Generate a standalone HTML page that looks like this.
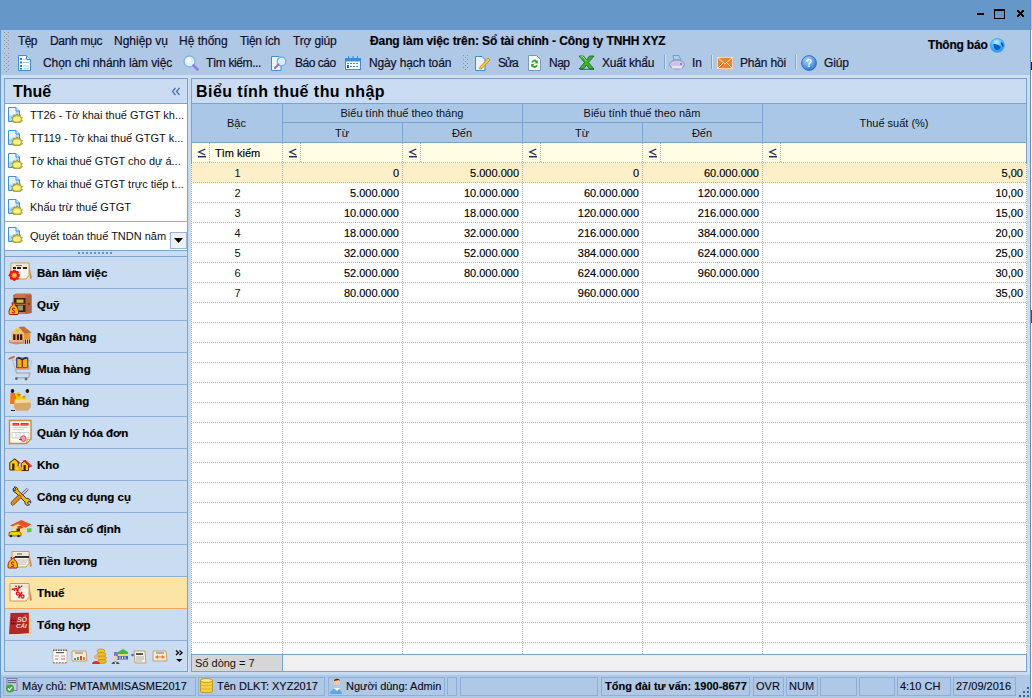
<!DOCTYPE html>
<html><head><meta charset="utf-8">
<style>
*{margin:0;padding:0;box-sizing:border-box}
html,body{width:1032px;height:698px;overflow:hidden;background:#CADCF0;font-family:"Liberation Sans",sans-serif;font-size:11px;color:#000}
.a{position:absolute}
.t{position:absolute;white-space:nowrap;line-height:1}
.g{color:#000;-webkit-text-stroke:0.15px #000}
#title{left:0;top:0;width:1032px;height:30px;background:#6597C8}
#tb{left:1px;top:30px;width:1029px;height:45px;background:#AFC8E6}
#wbl{left:0;top:0;width:1px;height:698px;background:#6597C8}
#wbr{left:1030px;top:0;width:1px;height:698px;background:#5C8EC2}
#wbr2{left:1031px;top:0;width:1px;height:698px;background:#FFFFFF}
.m{font-size:12px;color:#10102A;-webkit-text-stroke:0.2px #10102A}
.grip{width:6px;background-image:radial-gradient(circle at 1px 1px,#A79E95 0.9px,transparent 1px);background-size:4px 4px}
.gd{width:1px;height:1px;background:#9C948C}
.sep{width:1px;background:#7CA4D4;box-shadow:1px 0 0 #D2E3F5}
/* panels */
#lp{left:4px;top:78px;width:184px;height:594px;border:1px solid #7DA2CE;background:#C9DCF1}
#mp{left:191px;top:78px;width:836px;height:594px;border:1px solid #7DA2CE;background:#C9DCF1}
.hdr{background:#ABC7E7}
.hl{background:#7DA2CE}
.dv{background-image:linear-gradient(#B2B2B2 50%,transparent 50%);background-size:1px 2px;width:1px}
.dh{background-image:linear-gradient(90deg,#B2B2B2 50%,transparent 50%);background-size:2px 1px;height:1px}
.nb{font-weight:bold;font-size:11.5px;color:#000;-webkit-text-stroke:0.2px #000}
.sb{font-size:11px;color:#0A0A20;-webkit-text-stroke:0.12px #0A0A20}
.sp{position:absolute;top:677px;height:19px;border:1px solid #8EAFD7}
</style></head><body>
<div class="a" id="title"></div>
<div class="a" id="wbl"></div>
<div class="a" id="wbr"></div>
<div class="a" id="wbr2"></div>
<div class="a" style="left:1031px;top:0;width:1px;height:30px;background:#C4C4C4"></div>
<div class="a" style="left:1031px;top:62px;width:1px;height:8px;background:#102468"></div>
<div class="a" style="left:1031px;top:310px;width:1px;height:13px;background:#8A3A10"></div>
<!-- window controls -->
<div class="a" style="left:977px;top:13px;width:7px;height:2px;background:#000"></div>
<div class="a" style="left:994px;top:9px;width:11px;height:10px;border:1px solid #000;border-top-width:2px"></div>
<svg class="a" style="left:1017px;top:10px" width="7" height="7" viewBox="0 0 7 7" shape-rendering="crispEdges" fill="#000"><rect x="0" y="0" width="1" height="1"/><rect x="1" y="0" width="1" height="1"/><rect x="5" y="0" width="1" height="1"/><rect x="6" y="0" width="1" height="1"/><rect x="0" y="1" width="1" height="1"/><rect x="1" y="1" width="1" height="1"/><rect x="2" y="1" width="1" height="1"/><rect x="4" y="1" width="1" height="1"/><rect x="5" y="1" width="1" height="1"/><rect x="6" y="1" width="1" height="1"/><rect x="1" y="2" width="1" height="1"/><rect x="2" y="2" width="1" height="1"/><rect x="3" y="2" width="1" height="1"/><rect x="4" y="2" width="1" height="1"/><rect x="5" y="2" width="1" height="1"/><rect x="2" y="3" width="1" height="1"/><rect x="3" y="3" width="1" height="1"/><rect x="4" y="3" width="1" height="1"/><rect x="1" y="4" width="1" height="1"/><rect x="2" y="4" width="1" height="1"/><rect x="3" y="4" width="1" height="1"/><rect x="4" y="4" width="1" height="1"/><rect x="5" y="4" width="1" height="1"/><rect x="0" y="5" width="1" height="1"/><rect x="1" y="5" width="1" height="1"/><rect x="2" y="5" width="1" height="1"/><rect x="4" y="5" width="1" height="1"/><rect x="5" y="5" width="1" height="1"/><rect x="6" y="5" width="1" height="1"/><rect x="0" y="6" width="1" height="1"/><rect x="1" y="6" width="1" height="1"/><rect x="5" y="6" width="1" height="1"/><rect x="6" y="6" width="1" height="1"/></svg>

<!-- toolbar -->
<div class="a" id="tb"></div>
<div class="a" style="left:1px;top:75px;width:1029px;height:3px;background:#CEDFF1"></div>
<div class="a gd" style="left:4px;top:32px"></div><div class="a gd" style="left:8px;top:32px"></div><div class="a gd" style="left:4px;top:36px"></div><div class="a gd" style="left:8px;top:36px"></div><div class="a gd" style="left:4px;top:40px"></div><div class="a gd" style="left:8px;top:40px"></div><div class="a gd" style="left:4px;top:44px"></div><div class="a gd" style="left:8px;top:44px"></div><div class="a gd" style="left:4px;top:48px"></div><div class="a gd" style="left:8px;top:48px"></div><div class="a gd" style="left:6px;top:34px"></div><div class="a gd" style="left:6px;top:38px"></div><div class="a gd" style="left:6px;top:42px"></div><div class="a gd" style="left:6px;top:46px"></div>
<div class="a gd" style="left:4px;top:53px"></div><div class="a gd" style="left:8px;top:53px"></div><div class="a gd" style="left:4px;top:57px"></div><div class="a gd" style="left:8px;top:57px"></div><div class="a gd" style="left:4px;top:61px"></div><div class="a gd" style="left:8px;top:61px"></div><div class="a gd" style="left:4px;top:65px"></div><div class="a gd" style="left:8px;top:65px"></div><div class="a gd" style="left:4px;top:69px"></div><div class="a gd" style="left:8px;top:69px"></div><div class="a gd" style="left:6px;top:55px"></div><div class="a gd" style="left:6px;top:59px"></div><div class="a gd" style="left:6px;top:63px"></div><div class="a gd" style="left:6px;top:67px"></div><div class="a gd" style="left:6px;top:71px"></div>

<div class="t m" style="left:18px;top:35px;letter-spacing:-0.6px">Tệp</div>
<div class="t m" style="left:50px;top:35px;letter-spacing:-0.3px">Danh mục</div>
<div class="t m" style="left:114px;top:35px">Nghiệp vụ</div>
<div class="t m" style="left:179px;top:35px">Hệ thống</div>
<div class="t m" style="left:240px;top:35px;letter-spacing:-0.3px">Tiện ích</div>
<div class="t m" style="left:293px;top:35px;letter-spacing:-0.17px">Trợ giúp</div>
<div class="t m" style="left:370px;top:35px;font-weight:bold;color:#000;letter-spacing:-0.1px">Đang làm việc trên: Sổ tài chính - Công ty TNHH XYZ</div>
<div class="t m" style="left:928px;top:39px;font-weight:bold;color:#000;letter-spacing:-0.2px">Thông báo</div>

<div class="t m" style="left:43px;top:57px;letter-spacing:-0.1px">Chọn chi nhánh làm việc</div>
<div class="t m" style="left:206px;top:57px;letter-spacing:-0.4px">Tìm kiếm...</div>
<div class="t m" style="left:295px;top:57px;letter-spacing:-0.47px">Báo cáo</div>
<div class="t m" style="left:369px;top:57px;letter-spacing:-0.13px">Ngày hạch toán</div>
<div class="t m" style="left:498px;top:57px;letter-spacing:-1.0px">Sửa</div>
<div class="t m" style="left:549px;top:57px;letter-spacing:-0.5px">Nạp</div>
<div class="t m" style="left:602px;top:57px;letter-spacing:-0.2px">Xuất khẩu</div>
<div class="t m" style="left:692px;top:57px">In</div>
<div class="t m" style="left:740px;top:57px;letter-spacing:-0.17px">Phản hồi</div>
<div class="t m" style="left:824px;top:57px;letter-spacing:-0.15px">Giúp</div>
<div class="a gd" style="left:463px;top:55px"></div><div class="a gd" style="left:467px;top:55px"></div><div class="a gd" style="left:465px;top:57px"></div><div class="a gd" style="left:463px;top:59px"></div><div class="a gd" style="left:467px;top:59px"></div><div class="a gd" style="left:465px;top:61px"></div><div class="a gd" style="left:463px;top:63px"></div><div class="a gd" style="left:467px;top:63px"></div><div class="a gd" style="left:465px;top:65px"></div><div class="a gd" style="left:463px;top:67px"></div><div class="a gd" style="left:467px;top:67px"></div><div class="a gd" style="left:465px;top:69px"></div>
<div class="a sep" style="left:664px;top:55px;height:14px"></div>
<div class="a sep" style="left:711px;top:55px;height:14px"></div>
<div class="a sep" style="left:795px;top:55px;height:14px"></div>

<!-- ICONS_TB -->
<svg class="a" style="left:18px;top:55px" width="13" height="16" viewBox="0 0 13 16"><path d="M0.5 0.5H8.5L12.5 4.5V15.5H0.5Z" fill="#FFFFFF" stroke="#3C8CDC" stroke-width="1"/><path d="M8.5 0.5V4.5H12.5" fill="#D6E8FA" stroke="#3C8CDC" stroke-width="1"/><g fill="#2E7FD2"><rect x="2" y="3" width="2" height="2"/><rect x="2" y="6.5" width="2" height="2"/><rect x="2" y="10" width="2" height="2"/><rect x="2" y="13" width="2" height="1.5"/></g><g fill="#A8CCF0"><rect x="5" y="3.5" width="3" height="1"/><rect x="5" y="7" width="6" height="1"/><rect x="5" y="10.5" width="6" height="1"/><rect x="5" y="13.2" width="6" height="1"/></g></svg>
<svg class="a" style="left:183px;top:55px" width="16" height="16" viewBox="0 0 16 16"><circle cx="6.5" cy="6.5" r="5.5" fill="#DDF0FA" stroke="#7AB8DA" stroke-width="1.3"/><circle cx="5.5" cy="5" r="2.5" fill="#FFFFFF" opacity="0.8"/><path d="M10.5 10.5L14.5 14.5" stroke="#9B7BD8" stroke-width="2.6" stroke-linecap="round"/></svg>
<svg class="a" style="left:271px;top:55px" width="16" height="16" viewBox="0 0 16 16"><path d="M0.5 1.5H8L10 3.5V15.5H0.5Z" fill="#EAF3FC" stroke="#3C8CDC" stroke-width="1"/><circle cx="10.5" cy="6.5" r="4.3" fill="#D8EEFA" stroke="#6AAEDC" stroke-width="1.2"/><path d="M7.5 9.5L4 13" stroke="#8E6EC8" stroke-width="2" stroke-linecap="round"/></svg>
<svg class="a" style="left:345px;top:56px" width="16" height="14" viewBox="0 0 16 14"><rect x="0.5" y="2.5" width="15" height="11" fill="#FFFFFF" stroke="#3C8CDC"/><rect x="0.5" y="2.5" width="15" height="3" fill="#3C8CDC"/><g fill="#3C8CDC"><rect x="3" y="0" width="1" height="3"/><rect x="7.5" y="0" width="1" height="3"/><rect x="12" y="0" width="1" height="3"/><rect x="2" y="7" width="2" height="1"/><rect x="5" y="7" width="2" height="1"/><rect x="8" y="7" width="2" height="1"/><rect x="11" y="7" width="2" height="1"/><rect x="5" y="10" width="2" height="1"/><rect x="8" y="10" width="2" height="1"/><rect x="11" y="10" width="2" height="1"/></g><rect x="2" y="9" width="2" height="3" fill="#1A60B0"/></svg>
<svg class="a" style="left:475px;top:55px" width="16" height="16" viewBox="0 0 16 16"><path d="M0.5 1.5H7L10 4.5V15.5H0.5Z" fill="#E8F2FC" stroke="#3C8CDC" stroke-width="1"/><path d="M5 12L13 3L15 5L7 13.5L4.5 14Z" fill="#F5C842" stroke="#B8901A" stroke-width="0.8"/></svg>
<svg class="a" style="left:528px;top:55px" width="13" height="16" viewBox="0 0 13 16"><path d="M0.5 0.5H8.5L12.5 4.5V15.5H0.5Z" fill="#FFFFFF" stroke="#7A9ABE" stroke-width="1"/><path d="M3.5 7.5A3 3 0 0 1 9 6L9.8 5V8.5H6.5L7.8 7.2A1.7 1.7 0 0 0 4.8 7.8Z" fill="#2AA830"/><path d="M9.5 10A3 3 0 0 1 4 11.5L3.2 12.5V9H6.5L5.2 10.3A1.7 1.7 0 0 0 8.2 9.7Z" fill="#2AA830"/></svg>
<svg class="a" style="left:578px;top:55px" width="17" height="15" viewBox="0 0 17 15"><path d="M1 1H5.5L8.5 5L11.5 1H16L10.5 7.5L16 14H11.5L8.5 10L5.5 14H1L6.5 7.5Z" fill="#3CB030" stroke="#186818" stroke-width="0.8"/><path d="M2.5 1.8H5L8.5 6.3" stroke="#A8F090" stroke-width="0.9" fill="none"/><path d="M2 14.3H16" stroke="#186818" stroke-width="0.9"/></svg>
<svg class="a" style="left:669px;top:55px" width="16" height="15" viewBox="0 0 16 15"><path d="M4 0.5H10L12 5H5Z" fill="#9FD3F0" stroke="#5A9ACB" stroke-width="0.8"/><ellipse cx="8" cy="9.5" rx="7.5" ry="4.5" fill="#C9C6E6" stroke="#8C88B8" stroke-width="0.9"/><rect x="3" y="11" width="10" height="2.5" fill="#E6E4F4"/><circle cx="12" cy="9" r="0.9" fill="#6A6AA0"/></svg>
<svg class="a" style="left:717px;top:57px" width="16" height="12" viewBox="0 0 16 12"><rect x="0" y="0" width="16" height="12" fill="#F2822A"/><path d="M0.5 0.5L8 7L15.5 0.5M0.5 11.5L6 6M15.5 11.5L10 6" stroke="#FFE2C8" stroke-width="1" fill="none"/><rect x="0.5" y="0.5" width="15" height="11" fill="none" stroke="#FCE9D8" stroke-width="0.8"/></svg>
<svg class="a" style="left:801px;top:55px" width="16" height="16" viewBox="0 0 16 16"><defs><radialGradient id="hg" cx="0.4" cy="0.3" r="0.7"><stop offset="0" stop-color="#A8D4FA"/><stop offset="1" stop-color="#2F7FD8"/></radialGradient></defs><circle cx="8" cy="8" r="7.4" fill="url(#hg)" stroke="#2A5FA8" stroke-width="0.8"/><text x="8" y="12" font-size="10.5" font-family="Liberation Sans" font-weight="bold" fill="#FFF" text-anchor="middle">?</text></svg>
<svg class="a" style="left:990px;top:38px" width="15" height="15" viewBox="0 0 15 15"><defs><radialGradient id="gg" cx="0.45" cy="0.3" r="0.7"><stop offset="0" stop-color="#C8F0FF"/><stop offset="0.45" stop-color="#58C0FA"/><stop offset="1" stop-color="#1E8EEA"/></radialGradient></defs><circle cx="7.3" cy="7.4" r="7.2" fill="url(#gg)"/><path d="M3.2 6.5C5 5.5 8 6.5 10.5 8.5C11.5 9.5 10 11.5 7.5 12C5.5 12.2 4.5 11 4 9.5Z" fill="#0A5CC8"/><path d="M11 4C12.5 4.5 14 6.5 14 8.5C13.5 9.5 12.5 9 12 8C11.5 7 10.5 5.5 11 4Z" fill="#0A4EB8"/><circle cx="7.3" cy="7.4" r="6.8" fill="none" stroke="#36AEF6" stroke-width="0.8"/></svg>
<!-- /ICONS_TB -->

<!-- left panel -->
<div class="a" id="lp"></div>
<!-- LEFT_PANEL -->
<div class="t" style="left:13px;top:84px;font-size:16px;font-weight:bold;color:#000">Thuế</div>
<svg class="a" style="left:171px;top:87px" width="10" height="9" viewBox="0 0 10 9"><path d="M4.5 1L1.5 4.5L4.5 8M8.5 1L5.5 4.5L8.5 8" stroke="#4A6FA5" stroke-width="1.2" fill="none"/></svg>
<div class="a hl" style="left:5px;top:103px;width:182px;height:1px"></div>
<div class="a" style="left:5px;top:104px;width:182px;height:146px;background:#FFFFFF"></div>
<svg class="a" style="left:8px;top:107px" width="16" height="16" viewBox="0 0 16 16"><path d="M0.5 0.5H8L11.5 4V14.5H0.5Z" fill="#B4D6F8" stroke="#3D8FE0"/><path d="M1 1H7.5V7L1 9Z" fill="#EEF6FF"/><path d="M8 0.5V4H11.5" fill="#E8F2FC" stroke="#3D8FE0"/><path d="M9 6.8L10.2 8.6L12.2 7.8L12.4 9.9L14.6 10.6L13.2 12.3L14.6 14L12.4 14.6L12.2 16L10.2 15.4L9 16L7.8 15.4L5.8 16L5.6 14.6L3.4 14L4.8 12.3L3.4 10.6L5.6 9.9L5.8 7.8L7.8 8.6Z" fill="#C9C238" stroke="#948C18" stroke-width="0.7"/><ellipse cx="9" cy="12" rx="3.8" ry="2.5" fill="#F6F08A"/></svg>
<div class="t" style="left:30px;top:110px;font-size:11px;color:#111">TT26 - Tờ khai thuế GTGT kh...</div>
<svg class="a" style="left:8px;top:130px" width="16" height="16" viewBox="0 0 16 16"><path d="M0.5 0.5H8L11.5 4V14.5H0.5Z" fill="#B4D6F8" stroke="#3D8FE0"/><path d="M1 1H7.5V7L1 9Z" fill="#EEF6FF"/><path d="M8 0.5V4H11.5" fill="#E8F2FC" stroke="#3D8FE0"/><path d="M9 6.8L10.2 8.6L12.2 7.8L12.4 9.9L14.6 10.6L13.2 12.3L14.6 14L12.4 14.6L12.2 16L10.2 15.4L9 16L7.8 15.4L5.8 16L5.6 14.6L3.4 14L4.8 12.3L3.4 10.6L5.6 9.9L5.8 7.8L7.8 8.6Z" fill="#C9C238" stroke="#948C18" stroke-width="0.7"/><ellipse cx="9" cy="12" rx="3.8" ry="2.5" fill="#F6F08A"/></svg>
<div class="t" style="left:30px;top:133px;font-size:11px;color:#111">TT119 - Tờ khai thuế GTGT k...</div>
<svg class="a" style="left:8px;top:153px" width="16" height="16" viewBox="0 0 16 16"><path d="M0.5 0.5H8L11.5 4V14.5H0.5Z" fill="#B4D6F8" stroke="#3D8FE0"/><path d="M1 1H7.5V7L1 9Z" fill="#EEF6FF"/><path d="M8 0.5V4H11.5" fill="#E8F2FC" stroke="#3D8FE0"/><path d="M9 6.8L10.2 8.6L12.2 7.8L12.4 9.9L14.6 10.6L13.2 12.3L14.6 14L12.4 14.6L12.2 16L10.2 15.4L9 16L7.8 15.4L5.8 16L5.6 14.6L3.4 14L4.8 12.3L3.4 10.6L5.6 9.9L5.8 7.8L7.8 8.6Z" fill="#C9C238" stroke="#948C18" stroke-width="0.7"/><ellipse cx="9" cy="12" rx="3.8" ry="2.5" fill="#F6F08A"/></svg>
<div class="t" style="left:30px;top:156px;font-size:11px;color:#111">Tờ khai thuế GTGT cho dự á...</div>
<svg class="a" style="left:8px;top:176px" width="16" height="16" viewBox="0 0 16 16"><path d="M0.5 0.5H8L11.5 4V14.5H0.5Z" fill="#B4D6F8" stroke="#3D8FE0"/><path d="M1 1H7.5V7L1 9Z" fill="#EEF6FF"/><path d="M8 0.5V4H11.5" fill="#E8F2FC" stroke="#3D8FE0"/><path d="M9 6.8L10.2 8.6L12.2 7.8L12.4 9.9L14.6 10.6L13.2 12.3L14.6 14L12.4 14.6L12.2 16L10.2 15.4L9 16L7.8 15.4L5.8 16L5.6 14.6L3.4 14L4.8 12.3L3.4 10.6L5.6 9.9L5.8 7.8L7.8 8.6Z" fill="#C9C238" stroke="#948C18" stroke-width="0.7"/><ellipse cx="9" cy="12" rx="3.8" ry="2.5" fill="#F6F08A"/></svg>
<div class="t" style="left:30px;top:179px;font-size:11px;color:#111">Tờ khai thuế GTGT trực tiếp t...</div>
<svg class="a" style="left:8px;top:199px" width="16" height="16" viewBox="0 0 16 16"><path d="M0.5 0.5H8L11.5 4V14.5H0.5Z" fill="#B4D6F8" stroke="#3D8FE0"/><path d="M1 1H7.5V7L1 9Z" fill="#EEF6FF"/><path d="M8 0.5V4H11.5" fill="#E8F2FC" stroke="#3D8FE0"/><path d="M9 6.8L10.2 8.6L12.2 7.8L12.4 9.9L14.6 10.6L13.2 12.3L14.6 14L12.4 14.6L12.2 16L10.2 15.4L9 16L7.8 15.4L5.8 16L5.6 14.6L3.4 14L4.8 12.3L3.4 10.6L5.6 9.9L5.8 7.8L7.8 8.6Z" fill="#C9C238" stroke="#948C18" stroke-width="0.7"/><ellipse cx="9" cy="12" rx="3.8" ry="2.5" fill="#F6F08A"/></svg>
<div class="t" style="left:30px;top:202px;font-size:11px;color:#111">Khấu trừ thuế GTGT</div>
<div class="a" style="left:5px;top:221px;width:182px;height:1px;background:#8DAFD8"></div>
<svg class="a" style="left:8px;top:227px" width="16" height="16" viewBox="0 0 16 16"><path d="M0.5 0.5H8L11.5 4V14.5H0.5Z" fill="#B4D6F8" stroke="#3D8FE0"/><path d="M1 1H7.5V7L1 9Z" fill="#EEF6FF"/><path d="M8 0.5V4H11.5" fill="#E8F2FC" stroke="#3D8FE0"/><path d="M9 6.8L10.2 8.6L12.2 7.8L12.4 9.9L14.6 10.6L13.2 12.3L14.6 14L12.4 14.6L12.2 16L10.2 15.4L9 16L7.8 15.4L5.8 16L5.6 14.6L3.4 14L4.8 12.3L3.4 10.6L5.6 9.9L5.8 7.8L7.8 8.6Z" fill="#C9C238" stroke="#948C18" stroke-width="0.7"/><ellipse cx="9" cy="12" rx="3.8" ry="2.5" fill="#F6F08A"/></svg>
<div class="t" style="left:30px;top:231px;width:142px;overflow:hidden;font-size:11px;color:#111">Quyết toán thuế TNDN năm 2016</div>
<div class="a" style="left:170px;top:232px;width:17px;height:17px;background:#F0F0F0;border:1px solid #98B4D8"></div>
<svg class="a" style="left:174px;top:238px" width="9" height="5" viewBox="0 0 9 5"><path d="M0 0H9L4.5 5Z" fill="#000"/></svg>
<div class="a" style="left:5px;top:250px;width:182px;height:6px;background:#C9DCF1"></div>
<div class="a hl" style="left:5px;top:250px;width:182px;height:1px"></div>
<div class="a" style="left:78px;top:252px;width:36px;height:2px;background-image:linear-gradient(90deg,#6A8FC0 50%,transparent 50%);background-size:4px 2px"></div>
<div class="a hl" style="left:5px;top:256px;width:182px;height:1px"></div>
<div class="a" style="left:5px;top:288px;width:182px;height:1px;background:#8DAFD8"></div>
<div class="t nb" style="left:37px;top:268px">Bàn làm việc</div>
<!-- NAVICON0 --><svg class="a" style="left:4px;top:257px" width="32" height="32" viewBox="0 0 32 32"><path d="M25 7L28 21L26 22Z" fill="#C89050"/><path d="M7 6H25V19L22 22H7Z" fill="#FAF4E8" stroke="#CC9858" stroke-width="1"/><path d="M8 7H24V11H8Z" fill="#F2E6D0"/><path d="M22 22L23 19H25Z" fill="#E8C890"/><rect x="9" y="10" width="3" height="2" fill="#222"/><rect x="13" y="10" width="4" height="2" fill="#222"/><rect x="19" y="10" width="4" height="2" fill="#222"/><rect x="12" y="8" width="6" height="1" fill="#777"/><circle cx="14.200000000000001" cy="18.3" r="1.8" fill="#E81818"/><circle cx="6.4" cy="18.3" r="1.8" fill="#E81818"/><circle cx="10.3" cy="22.2" r="1.8" fill="#E81818"/><circle cx="10.3" cy="14.4" r="1.8" fill="#E81818"/><circle cx="13.057300000000001" cy="21.0573" r="1.8" fill="#E81818"/><circle cx="7.542700000000001" cy="21.0573" r="1.8" fill="#E81818"/><circle cx="13.057300000000001" cy="15.5427" r="1.8" fill="#E81818"/><circle cx="7.542700000000001" cy="15.5427" r="1.8" fill="#E81818"/><circle cx="10.3" cy="18.3" r="2.6" fill="#F89010"/><circle cx="10.3" cy="18.3" r="1.3" fill="#FFD040"/></svg><!-- /NAVICON0 -->
<div class="a" style="left:5px;top:320px;width:182px;height:1px;background:#8DAFD8"></div>
<div class="t nb" style="left:37px;top:300px">Quỹ</div>
<!-- NAVICON1 --><svg class="a" style="left:4px;top:289px" width="32" height="32" viewBox="0 0 32 32"><path d="M9 6L12 4.5H27L27.5 6V24L22 25H8.5Z" fill="#C87448"/><path d="M21.5 6H27.5V24L21.5 25Z" fill="#B0603A"/><rect x="10" y="9" width="11.5" height="14" fill="#3A1E10"/><rect x="10" y="14.7" width="11.5" height="1.2" fill="#C07040"/><rect x="12.5" y="10.5" width="7" height="3.3" fill="#C8C040"/><rect x="13.5" y="16.5" width="5.5" height="5" fill="#9A9A70"/><circle cx="25" cy="15" r="0.8" fill="#3A1E10"/><path d="M8 13.5L9.6 15L11.5 13.5L11 16.5C14.5 18 15 24 14 25.5H5.5C4.5 24 5 18 8.5 16.5Z" fill="#F2C000" stroke="#A81818" stroke-width="1"/><path d="M11 19.5C10 18.5 8 19 8.5 20.5C9 22 11 21.5 10.5 23C10 24 8.5 23.8 8 23" stroke="#C81818" stroke-width="1.1" fill="none"/></svg><!-- /NAVICON1 -->
<div class="a" style="left:5px;top:352px;width:182px;height:1px;background:#8DAFD8"></div>
<div class="t nb" style="left:37px;top:332px">Ngân hàng</div>
<!-- NAVICON2 --><svg class="a" style="left:4px;top:321px" width="32" height="32" viewBox="0 0 32 32"><path d="M14.5 6L20 5.5L27.5 11.5L21.5 14Z" fill="#C46A40"/><path d="M6.5 12L14.2 6L21 13.5Z" fill="#F0C870"/><circle cx="13.8" cy="9.5" r="1.6" fill="#C8D020"/><rect x="7.5" y="12" width="12.5" height="7.5" fill="#F2B878"/><rect x="9.2" y="13.3" width="2.3" height="6" fill="#401810"/><rect x="12.8" y="13.3" width="2.3" height="6" fill="#401810"/><rect x="16" y="13.3" width="2.3" height="6" fill="#401810"/><path d="M20 13L26.3 11.5V20L20 20.6Z" fill="#E89830"/><path d="M5 19H20.5L21 22.5L12 23.5L5 22Z" fill="#D88868"/><path d="M6 20H19" stroke="#F6D6B8" stroke-width="1"/><path d="M20.5 18L27.5 18.5L27 22L20.5 23.5Z" fill="#F4E4D4"/><path d="M21.5 18.5V23M23.5 18.5V22.8M25.5 18.6V22.4" stroke="#502818" stroke-width="1.2"/></svg><!-- /NAVICON2 -->
<div class="a" style="left:5px;top:384px;width:182px;height:1px;background:#8DAFD8"></div>
<div class="t nb" style="left:37px;top:364px">Mua hàng</div>
<!-- NAVICON3 --><svg class="a" style="left:4px;top:353px" width="32" height="32" viewBox="0 0 32 32"><path d="M4.6 6L10.6 3.7" stroke="#C06848" stroke-width="1.8"/><path d="M8.3 6.9L27.5 7.8L25.7 16L11.5 16Z" fill="none" stroke="#B8C2CC" stroke-width="1.3"/><path d="M10 11H26.5M15 7V16M20 7.3V16" stroke="#C8D0D8" stroke-width="0.9"/><path d="M11.5 16L12.5 20H26L24.5 24.8H12.5" fill="none" stroke="#A8B2BC" stroke-width="1.4"/><circle cx="12.4" cy="25.7" r="1.4" fill="#606870"/><circle cx="22" cy="26" r="1.4" fill="#606870"/><rect x="12.8" y="5" width="11" height="9.5" fill="#F2B800" stroke="#102060" stroke-width="1"/><path d="M18.3 5V14.5" stroke="#B02020" stroke-width="1.4"/><path d="M14 4.5L18.3 6.5L22.5 4.5" stroke="#102060" stroke-width="1.4" fill="#F2B800"/><rect x="12.5" y="14.5" width="12" height="2" fill="#E09060"/></svg><!-- /NAVICON3 -->
<div class="a" style="left:5px;top:416px;width:182px;height:1px;background:#8DAFD8"></div>
<div class="t nb" style="left:37px;top:396px">Bán hàng</div>
<!-- NAVICON4 --><svg class="a" style="left:4px;top:385px" width="32" height="32" viewBox="0 0 32 32"><ellipse cx="8.5" cy="6" rx="1.8" ry="2" fill="#201818"/><path d="M6.5 8H11L12.5 19H6Z" fill="#F07810"/><path d="M10 9L12.5 13L11.5 14Z" fill="#E06000"/><path d="M7.5 19.3V25M9.5 19.3V25" stroke="#F0D8C8" stroke-width="1.2"/><path d="M7 25.5H9M9 25.5H11" stroke="#202020" stroke-width="1.2"/><ellipse cx="23.4" cy="6" rx="1.8" ry="2" fill="#201818"/><path d="M20.5 8H25.5V14H20.5Z" fill="#B8D8E8"/><rect x="21" y="14" width="4" height="2" fill="#202838"/><path d="M12 8L15 7L17 12L22 10L21 16L12 16Z" fill="#F0C800"/><path d="M13 9L15 12L17 9ZM19 11L20 14L21 11Z" fill="#D87010"/><path d="M10.5 14.5L26.5 14L27 22L24 25.7H12L10 22Z" fill="#D8A868"/><path d="M10.5 14.5L26.5 14L26.8 17.5L11 18.2Z" fill="#F4D8A0"/></svg><!-- /NAVICON4 -->
<div class="a" style="left:5px;top:448px;width:182px;height:1px;background:#8DAFD8"></div>
<div class="t nb" style="left:37px;top:428px">Quản lý hóa đơn</div>
<!-- NAVICON5 --><svg class="a" style="left:4px;top:417px" width="32" height="32" viewBox="0 0 32 32"><path d="M5.5 3.5H27V22L22.5 26.5H5.5Z" fill="#FBFBF7" stroke="#D08838" stroke-width="1.4"/><path d="M22.5 26.5L23 22.5L27 22Z" fill="#F0D8B0" stroke="#D08838" stroke-width="0.8"/><rect x="8.5" y="6" width="6.5" height="2.6" fill="#F02020"/><rect x="16.5" y="6" width="8" height="2.6" fill="#F02020"/><path d="M9.5 7.3H14M17.5 7.3H23.5" stroke="#FFB0B0" stroke-width="0.5"/><path d="M8.5 10.5H24.5M8.5 12.5H20M8 15.5H25M8 21H25" stroke="#C8C8C8" stroke-width="0.9"/><path d="M8 15.5V21M12 15.5V21M16 15.5V21M20 15.5V21M25 15.5V21" stroke="#C8C8C8" stroke-width="0.8"/><circle cx="19.3" cy="21.6" r="2.8" fill="#F0A0B0" stroke="#E04050" stroke-width="0.9"/><rect x="15" y="22" width="3" height="1" fill="#4060C0"/></svg><!-- /NAVICON5 -->
<div class="a" style="left:5px;top:480px;width:182px;height:1px;background:#8DAFD8"></div>
<div class="t nb" style="left:37px;top:460px">Kho</div>
<!-- NAVICON6 --><svg class="a" style="left:4px;top:449px" width="32" height="32" viewBox="0 0 32 32"><path d="M9 10L11 9.5L16.5 13.8L14.5 15.3Z" fill="#E02020"/><path d="M5.8 13.5L10.8 10L14.2 13.5V21H5.8Z" fill="#F8D000" stroke="#302010" stroke-width="0.9"/><path d="M8.2 21V14.5H10.5V21Z" fill="#302010"/><path d="M18.5 11.5L21.8 11L28.3 17.3L25.3 18.8Z" fill="#F02818"/><path d="M17.2 14.5L20.5 12L24.5 16.5V21.6H17.2Z" fill="#F8C800" stroke="#4A1810" stroke-width="0.9"/><path d="M19.5 21.6V16H21.8V21.6Z" fill="#4A1810"/><path d="M10.5 18L14 17L18.3 18.5L17.5 22H10.6Z" fill="#F8A020"/><circle cx="13" cy="19.5" r="1.6" fill="#F8D040"/></svg><!-- /NAVICON6 -->
<div class="a" style="left:5px;top:512px;width:182px;height:1px;background:#8DAFD8"></div>
<div class="t nb" style="left:37px;top:492px">Công cụ dụng cụ</div>
<!-- NAVICON7 --><svg class="a" style="left:4px;top:481px" width="32" height="32" viewBox="0 0 32 32"><path d="M15.1 16L23.9 7.8" stroke="#3A2020" stroke-width="2.4"/><path d="M15.1 16L23.9 7.8" stroke="#F0F0F0" stroke-width="1.2"/><path d="M9.5 7C8.5 9 9.5 11.5 12 12L21 21C20.5 23.5 23 25 25.5 24L23.5 22L24 20.8L25.5 20.5L26.5 22.2C27.5 19.5 25 17 22.5 17.5L13.8 9.2C14.2 7 12 5.5 10 6L12 8L11.5 9.5L10.3 9.8Z" fill="#F8B800" stroke="#1A2050" stroke-width="0.9"/><path d="M15.3 15.8L8.8 22.3" stroke="#7A4A10" stroke-width="4.4" stroke-linecap="round"/><path d="M15.3 15.8L8.8 22.3" stroke="#D89020" stroke-width="3" stroke-linecap="round"/></svg><!-- /NAVICON7 -->
<div class="a" style="left:5px;top:544px;width:182px;height:1px;background:#8DAFD8"></div>
<div class="t nb" style="left:37px;top:524px">Tài sản cố định</div>
<!-- NAVICON8 --><svg class="a" style="left:4px;top:513px" width="32" height="32" viewBox="0 0 32 32"><path d="M8.7 11H21.6V21.6H8.7Z" fill="#F8D890"/><path d="M6 12.4L17.4 6.9L27.5 11.5L21.6 14.7L14 11Z" fill="#F05020"/><path d="M6 12.4L11 10.5L14 11L9 13.5Z" fill="#D87020"/><path d="M13 13.5L17.5 12.5L19.5 15L14.5 16Z" fill="#F04020"/><rect x="12.5" y="15.5" width="3.5" height="3" fill="#403020"/><path d="M23 15.5L27.5 15V19L23 19.5Z" fill="#60D020"/><path d="M5 19.5L8 18.5H15.5L17 20.5V23H5Z" fill="#F8D000" stroke="#5A4010" stroke-width="0.7"/><circle cx="7" cy="23" r="1.3" fill="#302820"/><circle cx="14.5" cy="23" r="1.3" fill="#302820"/></svg><!-- /NAVICON8 -->
<div class="a" style="left:5px;top:576px;width:182px;height:1px;background:#8DAFD8"></div>
<div class="t nb" style="left:37px;top:556px">Tiền lương</div>
<!-- NAVICON9 --><svg class="a" style="left:4px;top:545px" width="32" height="32" viewBox="0 0 32 32"><path d="M25 7.5L28 21L26 22Z" fill="#C89050"/><path d="M8 6.5H25V19L22 22H8Z" fill="#FAF4E8" stroke="#CC9858" stroke-width="1"/><path d="M9 7.5H24V11.5H9Z" fill="#F2E6D0"/><path d="M22 22L23 19H25Z" fill="#E8C890"/><rect x="11" y="11" width="14" height="2" fill="#303030"/><path d="M11.5 15H24M12 17H23M13 19H22" stroke="#B8B0A8" stroke-width="0.8"/><rect x="13" y="8.5" width="5" height="1" fill="#555"/><path d="M7 12L8.6 13.5L10.5 12L10 14.5C13.5 16 14 21.5 13 23H4.5C3.5 21.5 4 16 7.5 14.5Z" fill="#F2C000" stroke="#A81818" stroke-width="1"/><path d="M10 17.5C9 16.5 7 17 7.5 18.5C8 20 10 19.5 9.5 21C9 22 7.5 21.8 7 21" stroke="#C81818" stroke-width="1.1" fill="none"/></svg><!-- /NAVICON9 -->
<div class="a" style="left:5px;top:577px;width:182px;height:31px;background:#FCE4A6"></div>
<div class="a" style="left:5px;top:608px;width:182px;height:1px;background:#F0A858"></div>
<div class="t nb" style="left:37px;top:588px">Thuế</div>
<!-- NAVICON10 --><svg class="a" style="left:4px;top:577px" width="32" height="32" viewBox="0 0 32 32"><path d="M25 7.5L28 23L26 24Z" fill="#C89050"/><path d="M6 6.5H25V21L22 24H6Z" fill="#FAF4E8" stroke="#CC9858" stroke-width="1"/><path d="M7 7.5H24V11.5H7Z" fill="#F2E6D0"/><path d="M22 24L23 21H25Z" fill="#E8C890"/><circle cx="12" cy="9.3" r="0.8" fill="#333"/><circle cx="14.8" cy="9.3" r="0.8" fill="#333"/><circle cx="17.6" cy="9.3" r="0.8" fill="#333"/><path d="M7.5 12.5L13 11.5M10.5 12V14M13.5 11.5L16.5 10" stroke="#E81010" stroke-width="1.4"/><circle cx="13.5" cy="13" r="1.3" fill="#E81010"/><path d="M14.5 21L18 15" stroke="#E81010" stroke-width="1.5"/><circle cx="13.8" cy="16.5" r="1.5" fill="none" stroke="#E81010" stroke-width="1.3"/><circle cx="18.5" cy="19.5" r="1.5" fill="none" stroke="#E81010" stroke-width="1.3"/></svg><!-- /NAVICON10 -->
<div class="a" style="left:5px;top:640px;width:182px;height:1px;background:#8DAFD8"></div>
<div class="t nb" style="left:37px;top:620px">Tổng hợp</div>
<!-- NAVICON11 --><svg class="a" style="left:4px;top:609px" width="32" height="32" viewBox="0 0 32 32"><path d="M7 4.5L25 3.5L27.5 7V26.5L8 26Z" fill="#F0D0A0"/><path d="M6.5 4L24.8 3.7V24.5L5 25.5Z" fill="#B02828"/><path d="M5 25.5L24.8 24.5L25.5 25.8L6 26.8Z" fill="#F8E8C8"/><text x="18" y="12.8" font-size="7" font-family="Liberation Sans" font-weight="bold" font-style="italic" fill="#F8E0C0" text-anchor="middle">SỔ</text><text x="17.3" y="18.8" font-size="6.2" font-family="Liberation Sans" font-weight="bold" font-style="italic" fill="#F8E0C0" text-anchor="middle">CÁI</text><path d="M7 11.3H11.5M7 14.5H11.5" stroke="#101010" stroke-width="1.3" stroke-dasharray="1.2 0.8"/></svg><!-- /NAVICON11 -->
<svg class="a" style="left:52px;top:649px" width="16" height="15" viewBox="0 0 16 15"><path d="M1 1H15V14H1Z" fill="#FBF8F2" stroke="#C8B898" stroke-width="0.8"/><path d="M1 1.2H15" stroke="#303030" stroke-width="1" stroke-dasharray="1.5 1"/><path d="M1 13.8H15" stroke="#505050" stroke-width="0.8" stroke-dasharray="1.5 1.5"/><rect x="4" y="3" width="8" height="1.2" fill="#606060"/><path d="M3 7H7M9 7H13" stroke="#E090B0" stroke-width="1"/><path d="M3 10H6" stroke="#6090E0" stroke-width="1"/><path d="M9 10H13" stroke="#E06080" stroke-width="1"/></svg>
<svg class="a" style="left:71px;top:650px" width="17" height="12" viewBox="0 0 17 12"><path d="M1 1H15L16 11H1Z" fill="#F4EBDD" stroke="#C49A60" stroke-width="0.9"/><rect x="4" y="2.5" width="8" height="1" fill="#707070"/><rect x="3" y="8" width="2" height="2" fill="#4090E0"/><rect x="6" y="7" width="2" height="3" fill="#40B040"/><rect x="9" y="6" width="2" height="4" fill="#E04040"/><rect x="12" y="7" width="2" height="3" fill="#E08040"/></svg>
<svg class="a" style="left:91px;top:648px" width="16" height="16" viewBox="0 0 16 16"><ellipse cx="10" cy="3" rx="4" ry="2" fill="#F5C830" stroke="#B08010" stroke-width="0.6"/><ellipse cx="10.5" cy="6.5" rx="4.5" ry="2" fill="#F2C22A" stroke="#B08010" stroke-width="0.6"/><ellipse cx="11" cy="10" rx="4.5" ry="2" fill="#F0BE28" stroke="#B08010" stroke-width="0.6"/><ellipse cx="11" cy="13.5" rx="4.5" ry="2" fill="#EDB826" stroke="#B08010" stroke-width="0.6"/><circle cx="5" cy="9" r="2.3" fill="#E8B090"/><path d="M1 16C1 12 9 12 9 16Z" fill="#D8303A"/></svg>
<svg class="a" style="left:111px;top:649px" width="17" height="15" viewBox="0 0 17 15"><rect x="3" y="3" width="5" height="8" fill="#7080D0"/><path d="M7 3L12 0L17 3V10H7Z" fill="#40B848"/><rect x="7" y="5" width="10" height="2" fill="#E8E060"/><rect x="7" y="7" width="10" height="3.5" fill="#5060B8"/><path d="M9 7.5V10M11.5 7.5V10M14 7.5V10" stroke="#E0E8F8" stroke-width="1"/><circle cx="4.5" cy="9" r="2.3" fill="#F0D0B0"/><path d="M0.5 15C0.5 11.5 8.5 11.5 8.5 15Z" fill="#505050"/><path d="M4 12.5L4.5 15L5 12.5" stroke="#FFF" stroke-width="0.8"/></svg>
<svg class="a" style="left:131px;top:650px" width="16" height="14" viewBox="0 0 16 14"><path d="M3 1H14L15 13H4Z" fill="#F6F1E6" stroke="#B89868" stroke-width="0.9"/><rect x="5" y="3" width="7" height="2" fill="#555"/><path d="M5 7H13M5 9H13M5 11H11" stroke="#A0A0A0" stroke-width="0.8"/><circle cx="1.5" cy="5" r="1.3" fill="#5070D0"/></svg>
<svg class="a" style="left:152px;top:650px" width="16" height="12" viewBox="0 0 16 12"><path d="M1 1H14L15 11H1Z" fill="#F4EBDD" stroke="#C49A60" stroke-width="0.9"/><rect x="4" y="2.5" width="8" height="1" fill="#707070"/><path d="M3 7L6 5V9ZM13 7L10 5V9Z" fill="#E07820"/><path d="M6 7H10" stroke="#E07820" stroke-width="1"/></svg>
<svg class="a" style="left:175px;top:650px" width="8" height="13" viewBox="0 0 8 13"><path d="M1 0.5L3.5 2.8L1 5M4.5 0.5L7 2.8L4.5 5" stroke="#000" stroke-width="1.3" fill="none"/><path d="M1 9H7.5L4.25 12Z" fill="#000"/></svg>
<!-- /LEFT_PANEL -->

<!-- main panel -->
<div class="a" id="mp"></div>
<!-- MAIN_PANEL -->
<div class="t" style="left:196px;top:84px;font-size:16px;font-weight:bold;letter-spacing:0.45px;color:#000">Biểu tính thuế thu nhập</div>
<div class="a hl" style="left:192px;top:103px;width:834px;height:1px"></div>
<div class="a hdr" style="left:192px;top:104px;width:834px;height:38px"></div>
<div class="a hl" style="left:192px;top:142px;width:834px;height:1px"></div>
<div class="a hl" style="left:283px;top:122px;width:479px;height:1px"></div>
<div class="a hl" style="left:282px;top:104px;width:1px;height:38px"></div>
<div class="a hl" style="left:522px;top:104px;width:1px;height:38px"></div>
<div class="a hl" style="left:762px;top:104px;width:1px;height:38px"></div>
<div class="a hl" style="left:402px;top:123px;width:1px;height:19px"></div>
<div class="a hl" style="left:642px;top:123px;width:1px;height:19px"></div>
<div class="t" style="left:191px;width:91px;text-align:center;top:118px;color:#111">Bậc</div>
<div class="t" style="left:282px;width:240px;text-align:center;top:108px;color:#111">Biểu tính thuế theo tháng</div>
<div class="t" style="left:522px;width:240px;text-align:center;top:108px;color:#111">Biểu tính thuế theo năm</div>
<div class="t" style="left:282px;width:120px;text-align:center;top:128px;color:#111">Từ</div>
<div class="t" style="left:402px;width:120px;text-align:center;top:128px;color:#111">Đến</div>
<div class="t" style="left:522px;width:120px;text-align:center;top:128px;color:#111">Từ</div>
<div class="t" style="left:642px;width:120px;text-align:center;top:128px;color:#111">Đến</div>
<div class="t" style="left:762px;width:264px;text-align:center;top:118px;color:#111">Thuế suất (%)</div>
<div class="a" style="left:192px;top:143px;width:834px;height:20px;background:#FFFDE4"></div>
<div class="a" style="left:191px;top:163px;width:836px;height:491px;background:#FFFFFF"></div>
<div class="a" style="left:192px;top:163px;width:834px;height:20px;background:#FDF0C8"></div>
<svg class="a" style="left:197px;top:148px" width="10" height="10" viewBox="0 0 10 10"><path d="M8.3 1L1.8 4L8.3 7" stroke="#1E2A5A" stroke-width="1.3" fill="none"/><path d="M1 8.7H9" stroke="#1E2A5A" stroke-width="1.4"/></svg>
<div class="a dv" style="left:209px;top:143px;height:19px"></div>
<svg class="a" style="left:288px;top:148px" width="10" height="10" viewBox="0 0 10 10"><path d="M8.3 1L1.8 4L8.3 7" stroke="#1E2A5A" stroke-width="1.3" fill="none"/><path d="M1 8.7H9" stroke="#1E2A5A" stroke-width="1.4"/></svg>
<div class="a dv" style="left:300px;top:143px;height:19px"></div>
<svg class="a" style="left:408px;top:148px" width="10" height="10" viewBox="0 0 10 10"><path d="M8.3 1L1.8 4L8.3 7" stroke="#1E2A5A" stroke-width="1.3" fill="none"/><path d="M1 8.7H9" stroke="#1E2A5A" stroke-width="1.4"/></svg>
<div class="a dv" style="left:420px;top:143px;height:19px"></div>
<svg class="a" style="left:528px;top:148px" width="10" height="10" viewBox="0 0 10 10"><path d="M8.3 1L1.8 4L8.3 7" stroke="#1E2A5A" stroke-width="1.3" fill="none"/><path d="M1 8.7H9" stroke="#1E2A5A" stroke-width="1.4"/></svg>
<div class="a dv" style="left:540px;top:143px;height:19px"></div>
<svg class="a" style="left:648px;top:148px" width="10" height="10" viewBox="0 0 10 10"><path d="M8.3 1L1.8 4L8.3 7" stroke="#1E2A5A" stroke-width="1.3" fill="none"/><path d="M1 8.7H9" stroke="#1E2A5A" stroke-width="1.4"/></svg>
<div class="a dv" style="left:660px;top:143px;height:19px"></div>
<svg class="a" style="left:768px;top:148px" width="10" height="10" viewBox="0 0 10 10"><path d="M8.3 1L1.8 4L8.3 7" stroke="#1E2A5A" stroke-width="1.3" fill="none"/><path d="M1 8.7H9" stroke="#1E2A5A" stroke-width="1.4"/></svg>
<div class="a dv" style="left:780px;top:143px;height:19px"></div>
<div class="t" style="left:215px;top:148px;color:#000;-webkit-text-stroke:0.15px #000">Tìm kiếm</div>
<div class="a dh" style="left:192px;top:162px;width:834px;background-position:1px 0"></div>
<div class="a dh" style="left:192px;top:182px;width:834px;background-position:1px 0"></div>
<div class="a dh" style="left:192px;top:202px;width:834px;background-position:1px 0"></div>
<div class="a dh" style="left:192px;top:222px;width:834px;background-position:1px 0"></div>
<div class="a dh" style="left:192px;top:242px;width:834px;background-position:1px 0"></div>
<div class="a dh" style="left:192px;top:262px;width:834px;background-position:1px 0"></div>
<div class="a dh" style="left:192px;top:282px;width:834px;background-position:1px 0"></div>
<div class="a dh" style="left:192px;top:302px;width:834px;background-position:1px 0"></div>
<div class="a dh" style="left:192px;top:322px;width:834px;background-position:1px 0"></div>
<div class="a dh" style="left:192px;top:342px;width:834px;background-position:1px 0"></div>
<div class="a dh" style="left:192px;top:362px;width:834px;background-position:1px 0"></div>
<div class="a dh" style="left:192px;top:382px;width:834px;background-position:1px 0"></div>
<div class="a dh" style="left:192px;top:402px;width:834px;background-position:1px 0"></div>
<div class="a dh" style="left:192px;top:422px;width:834px;background-position:1px 0"></div>
<div class="a dh" style="left:192px;top:442px;width:834px;background-position:1px 0"></div>
<div class="a dh" style="left:192px;top:462px;width:834px;background-position:1px 0"></div>
<div class="a dh" style="left:192px;top:482px;width:834px;background-position:1px 0"></div>
<div class="a dh" style="left:192px;top:502px;width:834px;background-position:1px 0"></div>
<div class="a dh" style="left:192px;top:522px;width:834px;background-position:1px 0"></div>
<div class="a dh" style="left:192px;top:542px;width:834px;background-position:1px 0"></div>
<div class="a dh" style="left:192px;top:562px;width:834px;background-position:1px 0"></div>
<div class="a dh" style="left:192px;top:582px;width:834px;background-position:1px 0"></div>
<div class="a dh" style="left:192px;top:602px;width:834px;background-position:1px 0"></div>
<div class="a dh" style="left:192px;top:622px;width:834px;background-position:1px 0"></div>
<div class="a dh" style="left:192px;top:642px;width:834px;background-position:1px 0"></div>
<div class="a dv" style="left:282px;top:143px;height:511px"></div>
<div class="a dv" style="left:402px;top:143px;height:511px"></div>
<div class="a dv" style="left:522px;top:143px;height:511px"></div>
<div class="a dv" style="left:642px;top:143px;height:511px"></div>
<div class="a dv" style="left:762px;top:143px;height:511px"></div>
<div class="a dv" style="left:191px;top:163px;height:491px"></div>
<div class="a dv" style="left:1026px;top:163px;height:491px"></div>
<div class="t" style="left:192px;width:91px;text-align:center;top:168px;color:#111">1</div>
<div class="t g" style="right:633px;top:168px">0</div>
<div class="t g" style="right:513px;top:168px">5.000.000</div>
<div class="t g" style="right:393px;top:168px">0</div>
<div class="t g" style="right:273px;top:168px">60.000.000</div>
<div class="t g" style="right:9px;top:168px">5,00</div>
<div class="t" style="left:192px;width:91px;text-align:center;top:188px;color:#111">2</div>
<div class="t g" style="right:633px;top:188px">5.000.000</div>
<div class="t g" style="right:513px;top:188px">10.000.000</div>
<div class="t g" style="right:393px;top:188px">60.000.000</div>
<div class="t g" style="right:273px;top:188px">120.000.000</div>
<div class="t g" style="right:9px;top:188px">10,00</div>
<div class="t" style="left:192px;width:91px;text-align:center;top:208px;color:#111">3</div>
<div class="t g" style="right:633px;top:208px">10.000.000</div>
<div class="t g" style="right:513px;top:208px">18.000.000</div>
<div class="t g" style="right:393px;top:208px">120.000.000</div>
<div class="t g" style="right:273px;top:208px">216.000.000</div>
<div class="t g" style="right:9px;top:208px">15,00</div>
<div class="t" style="left:192px;width:91px;text-align:center;top:228px;color:#111">4</div>
<div class="t g" style="right:633px;top:228px">18.000.000</div>
<div class="t g" style="right:513px;top:228px">32.000.000</div>
<div class="t g" style="right:393px;top:228px">216.000.000</div>
<div class="t g" style="right:273px;top:228px">384.000.000</div>
<div class="t g" style="right:9px;top:228px">20,00</div>
<div class="t" style="left:192px;width:91px;text-align:center;top:248px;color:#111">5</div>
<div class="t g" style="right:633px;top:248px">32.000.000</div>
<div class="t g" style="right:513px;top:248px">52.000.000</div>
<div class="t g" style="right:393px;top:248px">384.000.000</div>
<div class="t g" style="right:273px;top:248px">624.000.000</div>
<div class="t g" style="right:9px;top:248px">25,00</div>
<div class="t" style="left:192px;width:91px;text-align:center;top:268px;color:#111">6</div>
<div class="t g" style="right:633px;top:268px">52.000.000</div>
<div class="t g" style="right:513px;top:268px">80.000.000</div>
<div class="t g" style="right:393px;top:268px">624.000.000</div>
<div class="t g" style="right:273px;top:268px">960.000.000</div>
<div class="t g" style="right:9px;top:268px">30,00</div>
<div class="t" style="left:192px;width:91px;text-align:center;top:288px;color:#111">7</div>
<div class="t g" style="right:633px;top:288px">80.000.000</div>
<div class="t g" style="right:393px;top:288px">960.000.000</div>
<div class="t g" style="right:9px;top:288px">35,00</div>
<div class="a hl" style="left:192px;top:654px;width:834px;height:1px"></div>
<div class="a" style="left:192px;top:655px;width:834px;height:16px;background:#F0F0F0"></div>
<div class="a" style="left:192px;top:655px;width:90px;height:16px;background:#D6D6D6"></div>
<div class="a hl" style="left:282px;top:655px;width:1px;height:16px"></div>
<div class="t" style="left:195px;top:658px;color:#111">Số dòng = 7</div>
<!-- /MAIN_PANEL -->

<!-- status bar -->
<div class="a" style="left:1px;top:675px;width:1029px;height:23px;background:#AFC8E6"></div>
<!-- STATUS -->
<div class="a" style="left:1px;top:672px;width:1029px;height:3px;background:#C8DAEF"></div>
<div class="sp" style="left:3px;width:193px"></div>
<div class="sp" style="left:198px;width:127px"></div>
<div class="sp" style="left:328px;width:117px"></div>
<div class="sp" style="left:447px;width:10px"></div>
<div class="sp" style="left:460px;width:138px"></div>
<div class="sp" style="left:601px;width:149px"></div>
<div class="sp" style="left:753px;width:31px"></div>
<div class="sp" style="left:786px;width:32px"></div>
<div class="sp" style="left:820px;width:37px"></div>
<div class="sp" style="left:859px;width:36px"></div>
<div class="sp" style="left:897px;width:54px"></div>
<div class="sp" style="left:953px;width:63px"></div>
<div class="t sb" style="left:22px;top:681px">Máy chủ: PMTAM\MISASME2017</div>
<div class="t sb" style="left:217px;top:681px">Tên DLKT: XYZ2017</div>
<div class="t sb" style="left:346px;top:681px">Người dùng: Admin</div>
<div class="t sb" style="left:605px;top:681px;font-weight:bold;color:#000">Tổng đài tư vấn: 1900-8677</div>
<div class="t sb" style="left:756px;top:681px">OVR</div>
<div class="t sb" style="left:789px;top:681px">NUM</div>
<div class="t sb" style="left:900px;top:681px">4:10 CH</div>
<div class="t sb" style="left:956px;top:681px">27/09/2016</div>
<svg class="a" style="left:5px;top:678px" width="14" height="15" viewBox="0 0 14 15"><rect x="2" y="0.5" width="10" height="12" fill="#C8C8D8" stroke="#7070A0" stroke-width="0.8"/><rect x="3" y="2" width="8" height="1.2" fill="#6A6A90"/><rect x="3" y="4" width="8" height="1.2" fill="#6A6A90"/><circle cx="5" cy="10.5" r="4" fill="#3AAA3A"/><path d="M3 10.5L4.5 12L7 9" stroke="#FFF" stroke-width="1.2" fill="none"/></svg>
<svg class="a" style="left:200px;top:678px" width="13" height="16" viewBox="0 0 13 16"><path d="M0.5 2.5V13.5C0.5 15 12.5 15 12.5 13.5V2.5" fill="#F5D04A" stroke="#C09010" stroke-width="0.9"/><ellipse cx="6.5" cy="2.5" rx="6" ry="2" fill="#FBE68A" stroke="#C09010" stroke-width="0.9"/><path d="M0.5 6.5C0.5 8 12.5 8 12.5 6.5M0.5 10C0.5 11.5 12.5 11.5 12.5 10" stroke="#D8A820" stroke-width="0.8" fill="none"/></svg>
<svg class="a" style="left:329px;top:678px" width="14" height="16" viewBox="0 0 14 16"><circle cx="8" cy="4" r="3.2" fill="#F2C8A0"/><path d="M5 3C5 0 11 0 11 3L10 2Z" fill="#3A2A1A"/><path d="M1 16C1 9 13 9 13 16Z" fill="#5BA8E8"/><path d="M5 10L8 13L11 10" fill="#FFF"/></svg>
<div class="a" style="left:1027px;top:687px;width:2px;height:2px;background:#46628E"></div><div class="a" style="left:1023px;top:691px;width:2px;height:2px;background:#46628E"></div><div class="a" style="left:1027px;top:691px;width:2px;height:2px;background:#46628E"></div><div class="a" style="left:1019px;top:695px;width:2px;height:2px;background:#46628E"></div><div class="a" style="left:1023px;top:695px;width:2px;height:2px;background:#46628E"></div><div class="a" style="left:1027px;top:695px;width:2px;height:2px;background:#46628E"></div>
<!-- /STATUS -->
</body></html>
